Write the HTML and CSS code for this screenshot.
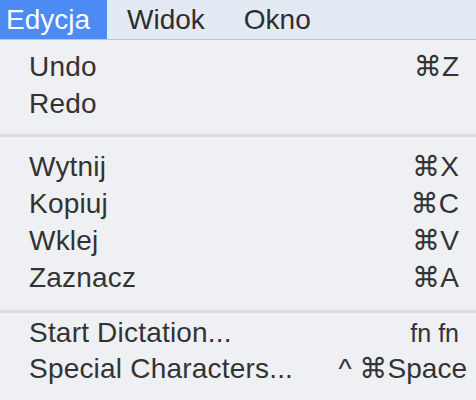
FILE: index.html
```html
<!DOCTYPE html>
<html lang="pl">
<head>
<meta charset="utf-8">
<title>Edycja</title>
<link rel="stylesheet" href="styles.css">
</head>
<body>
<nav class="menubar">
  <span class="bar-item active">Edycja</span>
  <span class="bar-item">Widok</span>
  <span class="bar-item">Okno</span>
</nav>
<div class="menu">
  <div class="row"><span class="label">Undo</span><span class="key">⌘Z</span></div>
  <div class="row"><span class="label">Redo</span><span class="key"></span></div>
  <div class="sep"></div>
  <div class="row"><span class="label">Wytnij</span><span class="key">⌘X</span></div>
  <div class="row"><span class="label">Kopiuj</span><span class="key">⌘C</span></div>
  <div class="row"><span class="label">Wklej</span><span class="key">⌘V</span></div>
  <div class="row"><span class="label">Zaznacz</span><span class="key">⌘A</span></div>
  <div class="sep sep-tight"></div>
  <div class="row row-last"><span class="label">Start Dictation...</span><span class="key key-small">fn fn</span></div>
  <div class="row row-last"><span class="label">Special Characters...</span><span class="key key-wide"><span class="ctrl">^</span>⌘Space</span></div>
</div>
</body>
</html>
```

FILE: styles.css
```css
html, body {
  margin: 0;
  padding: 0;
  background: #eff0f4;
  font-family: "Liberation Sans", "DejaVu Sans", sans-serif;
  color: #333333;
  overflow: hidden;
}

.menubar {
  display: flex;
  height: 39px;
  background: #e4eaf4;
  border-bottom: 1px solid #c5c6ca;
}

.bar-item {
  display: flex;
  align-items: center;
  padding: 0 19px 0 20px;
  font-size: 28px;
  color: #2e2e2e;
  line-height: 39px;
}

.bar-item.active {
  background: #4b8bf3;
  color: #ffffff;
  padding-left: 6px;
  width: 82px;
}

.menu {
  padding: 8px 17px 0 29px;
}

.row {
  display: flex;
  justify-content: space-between;
  height: 37px;
  line-height: 37px;
  font-size: 28px;
  letter-spacing: 0.2px;
}

.row-last {
  height: 36px;
  line-height: 36px;
}

.key {
  white-space: nowrap;
  letter-spacing: 0;
}

.key-small {
  font-size: 25px;
}

.key-wide {
  margin-right: -8px;
}

.ctrl {
  margin-right: 8px;
}

.sep {
  height: 3px;
  background: #dcdde2;
  margin: 12px -17px 11px -29px;
}

.sep-tight {
  margin-top: 14px;
  margin-bottom: 2px;
}
```
